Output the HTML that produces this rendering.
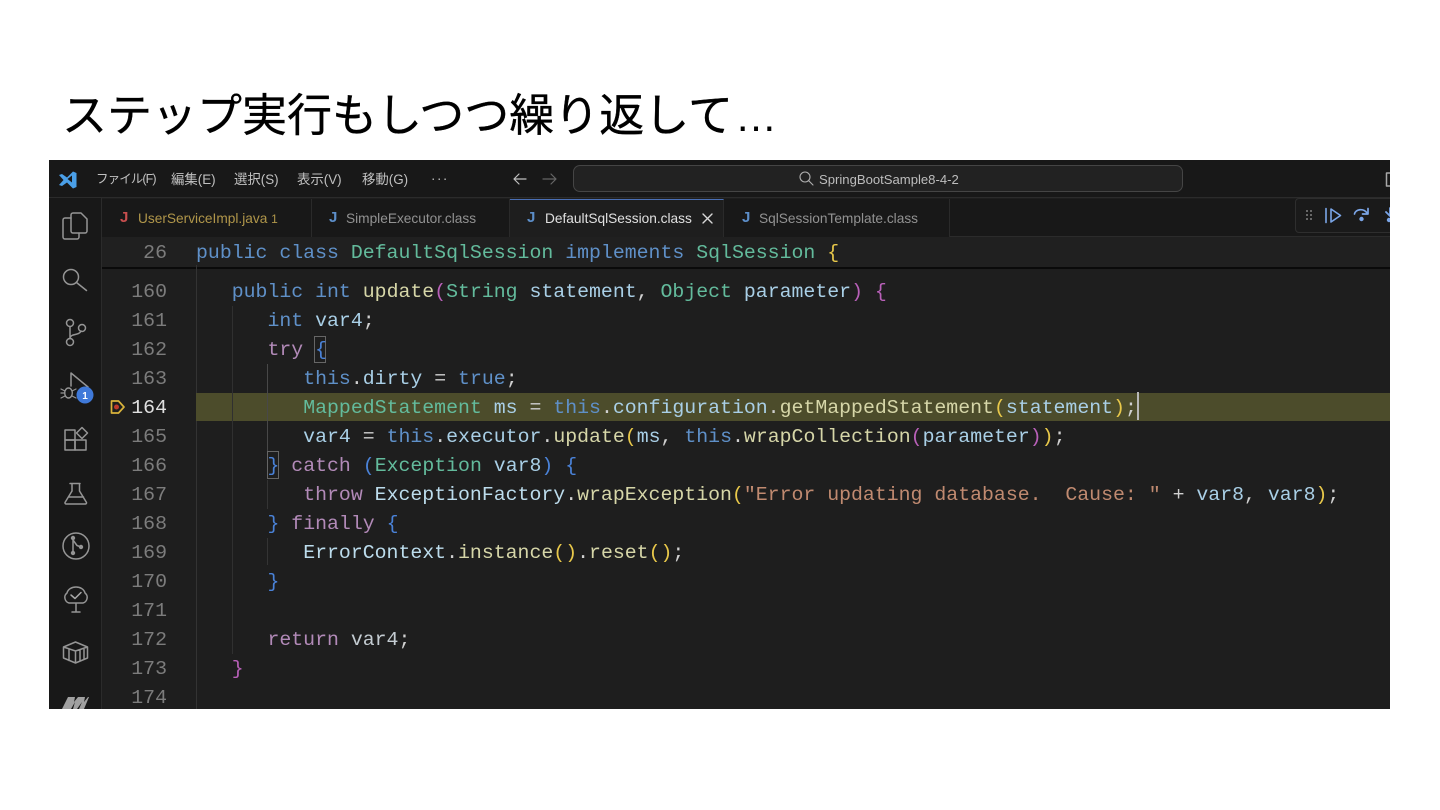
<!DOCTYPE html>
<html lang="ja">
<head>
<meta charset="utf-8">
<title>ステップ実行</title>
<style>
html,body{margin:0;padding:0;background:#fff;width:1440px;height:810px;overflow:hidden}
#t{position:absolute;left:62px;top:83px;font:45px/66px "Liberation Sans","Noto Sans CJK JP",sans-serif;color:#000;white-space:nowrap;-webkit-text-stroke:.35px #000}
#t span{font-size:42px;-webkit-text-stroke:0;margin-left:2px}
#w{position:absolute;left:49px;top:160px;width:1341px;height:549px;background:#1e1e1e;overflow:hidden;font-family:"Liberation Sans","Noto Sans CJK JP",sans-serif}
.a{position:absolute}
.m{position:absolute;top:11px;font-size:13.400px;line-height:17px;color:#c0c0c0;white-space:nowrap}
.tab{position:absolute;top:39px;height:38px;background:#181818;border-right:1px solid #2a2a2a;box-sizing:border-box}
.tt{position:absolute;top:50px;font-size:13.700px;line-height:18px;white-space:nowrap;color:#929292}
.j{position:absolute;top:49px;font-size:15px;line-height:18px;font-weight:bold;color:#5c8ec9}
.c{position:absolute;left:147px;height:29px;font:19.850px/29px "Liberation Mono",monospace;white-space:pre;color:#a9cfe6;filter:blur(.25px)}
.n{position:absolute;left:60px;width:58px;text-align:right;font:19.850px/29px "Liberation Mono",monospace;color:#7c7c7c;filter:blur(.25px)}
.k{color:#5f90c8}.p{color:#b28ab8}.g{color:#63bb9c}.f{color:#d6d6a8}.w{color:#d0d0d0}.s{color:#c08a70}.y{color:#e8c84a}.v{color:#b860b8}.b{color:#4a82d8}.x{color:#bcdcec}
</style>
</head>
<body>
<div id="t">ステップ実行もしつつ繰り返して<span>…</span></div>
<div id="w">
  <div class="a" style="left:0;top:0;width:1341px;height:38px;background:#181818;border-bottom:1px solid #2b2b2b;box-sizing:border-box"></div>
  <div class="a" style="left:0;top:38px;width:53px;height:511px;background:#181818;border-right:1px solid #2b2b2b;box-sizing:border-box"></div>
  <div class="a" style="left:53px;top:39px;width:1288px;height:38px;background:#181818;border-bottom:1px solid #2b2b2b;box-sizing:border-box"></div>

  <span class="m" style="left:47px;font-size:12.500px;letter-spacing:-.9px">ファイル(F)</span>
  <span class="m" style="left:122px">編集(E)</span>
  <span class="m" style="left:185px">選択(S)</span>
  <span class="m" style="left:248px">表示(V)</span>
  <span class="m" style="left:313px">移動(G)</span>
  <span class="m" style="left:382px;top:10px;letter-spacing:1.500px">···</span>

  <div class="a" style="left:524px;top:5px;width:610px;height:27px;background:#222;border:1px solid #454545;border-radius:7px;box-sizing:border-box"></div>
  <span class="a" style="left:770px;top:11px;font-size:13.100px;line-height:17px;color:#bdbdbd;white-space:nowrap">SpringBootSample8-4-2</span>

  <div class="tab" style="left:53px;width:210px"></div>
  <div class="tab" style="left:263px;width:198px"></div>
  <div class="tab" style="left:461px;width:214px;background:#1e1e1e;height:39px;border-top:1px solid #4a6fb5;border-right:1px solid #2a2a2a"></div>
  <div class="tab" style="left:675px;width:226px"></div>

  <span class="j" style="left:71px;color:#c74e4e">J</span><span class="tt" style="left:89px;color:#b0964a">UserServiceImpl.java <span style="font-size:12px">1</span></span>
  <span class="j" style="left:280px">J</span><span class="tt" style="left:297px">SimpleExecutor.class</span>
  <span class="j" style="left:478px">J</span><span class="tt" style="left:496px;color:#e0e0e0">DefaultSqlSession.class</span>
  <span class="j" style="left:693px">J</span><span class="tt" style="left:710px">SqlSessionTemplate.class</span>

  <div class="a" style="left:1246px;top:38px;width:100px;height:35px;background:#1a1a1a;border:1px solid #2e2e2e;border-radius:4px;box-sizing:border-box"></div>

  <!-- editor sticky header -->
  <div class="a" style="left:53px;top:77px;width:1288px;height:30px;background:#202020"></div>
  <div class="a" style="left:53px;top:107px;width:1288px;height:2px;background:#0a0a0a"></div>
  <div class="a" style="left:147px;top:105px;width:1px;height:444px;background:#333"></div>

  <!-- current line -->
  <div class="a" style="left:147px;top:233px;width:1194px;height:28px;background:#4c4c2b"></div>
  <div class="a" style="left:1088px;top:232px;width:1.500px;height:28px;background:#b8b8b8"></div>

  <!-- indent guides -->
  <div class="a" style="left:183px;top:146px;width:1px;height:348px;background:#303030"></div>
  <div class="a" style="left:218px;top:204px;width:1px;height:87px;background:#484848"></div>
  <div class="a" style="left:218px;top:320px;width:1px;height:29px;background:#343434"></div>
  <div class="a" style="left:218px;top:378px;width:1px;height:27px;background:#343434"></div>

  <!-- bracket boxes -->
  <div class="a" style="left:265px;top:176px;width:12px;height:27px;border:1px solid #666;box-sizing:border-box"></div>
  <div class="a" style="left:218px;top:291px;width:12px;height:28px;border:1px solid #666;box-sizing:border-box"></div>

  <span class="n" style="top:78px">26</span>
  <span class="n" style="top:117px">160</span>
  <span class="n" style="top:146px">161</span>
  <span class="n" style="top:175px">162</span>
  <span class="n" style="top:204px">163</span>
  <span class="n" style="top:233px;color:#e0e0e0">164</span>
  <span class="n" style="top:262px">165</span>
  <span class="n" style="top:291px">166</span>
  <span class="n" style="top:320px">167</span>
  <span class="n" style="top:349px">168</span>
  <span class="n" style="top:378px">169</span>
  <span class="n" style="top:407px">170</span>
  <span class="n" style="top:436px">171</span>
  <span class="n" style="top:465px">172</span>
  <span class="n" style="top:494px">173</span>
  <span class="n" style="top:523px">174</span>

  <div class="c" style="top:78px"><span class="k">public class</span> <span class="g">DefaultSqlSession</span> <span class="k">implements</span> <span class="g">SqlSession</span> <span class="y">{</span></div>
  <div class="c" style="top:117px">   <span class="k">public int</span> <span class="f">update</span><span class="v">(</span><span class="g">String</span> statement<span class="w">,</span> <span class="g">Object</span> parameter<span class="v">)</span> <span class="v">{</span></div>
  <div class="c" style="top:146px">      <span class="k">int</span> var4<span class="w">;</span></div>
  <div class="c" style="top:175px">      <span class="p">try</span> <span class="b">{</span></div>
  <div class="c" style="top:204px">         <span class="k">this</span><span class="w">.</span>dirty <span class="w">=</span> <span class="k">true</span><span class="w">;</span></div>
  <div class="c" style="top:233px">         <span class="g">MappedStatement</span> ms <span class="w">=</span> <span class="k">this</span><span class="w">.</span>configuration<span class="w">.</span><span class="f">getMappedStatement</span><span class="y">(</span>statement<span class="y">)</span><span class="w">;</span></div>
  <div class="c" style="top:262px">         var4 <span class="w">=</span> <span class="k">this</span><span class="w">.</span>executor<span class="w">.</span><span class="f">update</span><span class="y">(</span>ms<span class="w">,</span> <span class="k">this</span><span class="w">.</span><span class="f">wrapCollection</span><span class="v">(</span>parameter<span class="v">)</span><span class="y">)</span><span class="w">;</span></div>
  <div class="c" style="top:291px">      <span class="b">}</span> <span class="p">catch</span> <span class="b">(</span><span class="g">Exception</span> var8<span class="b">)</span> <span class="b">{</span></div>
  <div class="c" style="top:320px">         <span class="p">throw</span> <span class="x">ExceptionFactory</span><span class="w">.</span><span class="f">wrapException</span><span class="y">(</span><span class="s">"Error updating database.  Cause: "</span> <span class="w">+</span> var8<span class="w">,</span> var8<span class="y">)</span><span class="w">;</span></div>
  <div class="c" style="top:349px">      <span class="b">}</span> <span class="p">finally</span> <span class="b">{</span></div>
  <div class="c" style="top:378px">         <span class="x">ErrorContext</span><span class="w">.</span><span class="f">instance</span><span class="y">()</span><span class="w">.</span><span class="f">reset</span><span class="y">()</span><span class="w">;</span></div>
  <div class="c" style="top:407px">      <span class="b">}</span></div>
  <div class="c" style="top:465px">      <span class="p">return</span> <span style="color:#c4ccd2">var4</span><span class="w">;</span></div>
  <div class="c" style="top:494px">   <span class="v">}</span></div>

  <!-- icons, coordinates relative to window -->
  <svg class="a" style="left:0;top:0" width="1341" height="549" viewBox="0 0 1341 549" fill="none" stroke-linecap="round" stroke-linejoin="round">
    <!-- VS Code logo -->
    <path d="M10 15l3-1 5 3.500 6-6 3.500 1.500v14l-3.500 1.500-6-6-5 3.500-3-1 4.500-5z" fill="#4a9fe8"/>
    <path d="M18.500 19l4.500-3.500v7z" fill="#181818"/>
    <!-- title arrows -->
    <path d="M477 19h-12M470 14l-5 5 5 5" stroke="#c0c0c0" stroke-width="1.200"/>
    <path d="M494 19h13M502 14l5 5-5 5" stroke="#666" stroke-width="1.200"/>
    <!-- search -->
    <circle cx="756" cy="17" r="5" stroke="#b0b0b0" stroke-width="1.100"/>
    <path d="M760 21l4 4" stroke="#b0b0b0" stroke-width="1.100"/>
    <!-- layout stub -->
    <path d="M1341 13h-3.500v13h3.500" stroke="#a8a8a8" stroke-width="1.500"/>
    <!-- tab close -->
    <path d="M654 54l9 9M663 54l-9 9" stroke="#d8d8d8" stroke-width="1.400"/>
    <!-- debug toolbar -->
    <g fill="#808080"><circle cx="1258" cy="51" r="1"/><circle cx="1262" cy="51" r="1"/><circle cx="1258" cy="55" r="1"/><circle cx="1262" cy="55" r="1"/><circle cx="1258" cy="59" r="1"/><circle cx="1262" cy="59" r="1"/></g>
    <path d="M1277 48.500v14M1282 49l9.500 6.500-9.500 6.500z" stroke="#7ba6e8" stroke-width="1.600"/>
    <path d="M1305.500 54c1-5 9-6 12.500-1M1319 48.500v5.500h-5.500" stroke="#7ba6e8" stroke-width="1.700"/>
    <circle cx="1312.500" cy="59" r="2.200" fill="#7ba6e8"/>
    <path d="M1341 48v7M1337 52l4 4" stroke="#7ba6e8" stroke-width="1.800"/>
    <circle cx="1340" cy="60" r="2.200" fill="#7ba6e8"/>
    <!-- activity icons -->
    <g stroke="#959595" stroke-width="1.500">
      <path d="M22 58h-6a2 2 0 0 0-2 2v17a2 2 0 0 0 2 2h12a2 2 0 0 0 2-2v-4"/>
      <path d="M22 71v-16a2 2 0 0 1 2-2h8l6 6v12a2 2 0 0 1-2 2H24a2 2 0 0 1-2-2z"/>
      <circle cx="22" cy="117" r="7.500"/><path d="M27.500 122.500l10 8"/>
      <circle cx="21" cy="163" r="3.500"/><circle cx="21" cy="182" r="3.500"/><circle cx="33" cy="168" r="3.500"/>
      <path d="M21 166.500v12M21 178c1-5 9-2 11-7"/>
      <path d="M22 226v-13l17 14-5 3"/>
      <rect x="16" y="270" width="10" height="10"/><rect x="16" y="280" width="10" height="10"/><rect x="26" y="280" width="11" height="10"/>
      <path d="M33 267.500l5.500 5.500-5.500 5.500-5.500-5.500z"/>
      <path d="M23 324v7l-7 11.500a1.200 1.200 0 0 0 1 1.500h19.500a1.200 1.200 0 0 0 1-1.500l-7-11.500v-7M21 323.500h10M19.500 337h15"/>
      <circle cx="27" cy="386" r="13"/>
      <path d="M24 379v14M24 380l4 5.500 4 1.500"/>
      <path d="M27 452v-9M23 452h8M20 443c-4-1-6-7-2-10 1-4 5-6 9-6 4 0 8 2 9 6 4 3 2 9-2 10z"/>
      <path d="M22 435l4 3.500 6-6" stroke="#a8a8a8"/>
      <path d="M14.500 487l12-5 12 5v11l-12 5-12-5zM14.500 487l12 4 12-4M26.500 491v12M20 489.500v11M31 490v11M35 489v10"/>
    </g>
    <g fill="#959595">
      <circle cx="24" cy="378" r="2.200"/><circle cx="24" cy="393" r="2.200"/><circle cx="32" cy="387" r="2.200"/>
    </g>
    <path d="M13 549l6-12h7l-1 5 4-5h7l-1 5 4-5h1l-5 12h-5l3-7-5 7h-4l2-7-4 7z" fill="#a0a0a0"/>
    <!-- bug -->
    <ellipse cx="19.500" cy="233" rx="3.800" ry="5" stroke="#959595" stroke-width="1.400"/>
    <path d="M12 229l4 2M12 233h4M12 238l4-2M27 229l-4 2M27 238l-4-2" stroke="#959595" stroke-width="1.200"/>
    <circle cx="36" cy="235" r="8.500" fill="#3f79d9"/>
    <text x="36" y="239" text-anchor="middle" fill="#fff" font-family="Liberation Sans" font-size="10" font-weight="bold" stroke="none">1</text>
    <!-- debug pointer -->
    <path d="M62.500 241h7l5.500 6-5.500 6h-7z" stroke="#d9b33b" stroke-width="1.700"/>
    <circle cx="67.500" cy="247" r="2.500" fill="#c0392b"/>
  </svg>
</div>
</body>
</html>
